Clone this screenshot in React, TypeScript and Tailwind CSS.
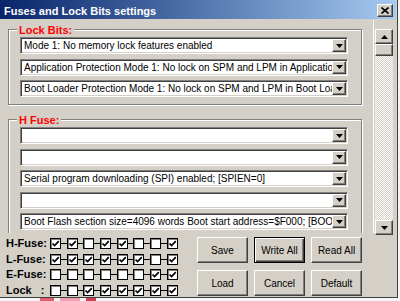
import React from 'react'

const raised =
  'border border-t-white border-l-white border-r-[#404040] border-b-[#404040] shadow-[inset_-1px_-1px_0_#808080] bg-[#d4d0c8]'

function Arrow({ up = false }: { up?: boolean }) {
  return (
    <svg width="7" height="4" viewBox="0 0 7 4" className={up ? 'rotate-180' : ''}>
      <path d="M0 0h7L3.5 4z" fill="#000" />
    </svg>
  )
}

function Combo({ text }: { text: string }) {
  return (
    <div className="flex h-[17px] w-[328px] border border-t-[#808080] border-l-[#808080] border-r-white border-b-white bg-white p-[1px] shadow-[inset_1px_1px_0_#404040,inset_-1px_-1px_0_#d4d0c8]">
      <div className="flex-1 overflow-hidden whitespace-nowrap pl-[2px] text-[10px] leading-[13px] text-black">
        {text}
      </div>
      <div className={`flex w-[14px] items-center justify-center ${raised}`}>
        <Arrow />
      </div>
    </div>
  )
}

function Group({ title, items }: { title: string; items: string[] }) {
  return (
    <div className="relative w-[354px] border border-[#808080] px-[11px] pt-[7px] pb-[7px] shadow-[inset_1px_1px_0_#fff,1px_1px_0_#fff]">
      <span className="absolute -top-[6px] left-[8px] bg-[#d4d0c8] px-[2px] text-[11px] leading-[12px] font-bold text-[#ff0000]">
        {title}
      </span>
      <div className="flex flex-col gap-[4.5px]">
        {items.map((t, i) => (
          <Combo key={i} text={t} />
        ))}
      </div>
    </div>
  )
}

const fuseRows: { label: React.ReactNode; bits: number[] }[] = [
  { label: 'H-Fuse:', bits: [1, 1, 0, 1, 1, 0, 0, 1] },
  { label: 'L-Fuse:', bits: [1, 1, 1, 1, 1, 1, 0, 1] },
  { label: 'E-Fuse:', bits: [0, 0, 0, 0, 0, 0, 1, 1] },
  {
    label: (
      <>
        Lock<span className="ml-[9px]">:</span>
      </>
    ),
    bits: [0, 0, 1, 1, 1, 1, 1, 1],
  },
]

function Check({ on }: { on: boolean }) {
  return (
    <div className="flex h-[11px] w-[11px] shrink-0 items-center justify-center border border-black bg-white shadow-[inset_1px_1px_0_#808080]">
      {on && (
        <svg width="9" height="9" viewBox="0 0 9 9">
          <path d="M1.5 4.5 3.6 6.6 7.8 2.2" fill="none" stroke="#000" strokeWidth="1.7" />
        </svg>
      )}
    </div>
  )
}

function Btn({ label, def = false }: { label: string; def?: boolean }) {
  const cls = def
    ? 'border border-black bg-[#d4d0c8] shadow-[inset_1px_1px_0_#fff,inset_-1px_-1px_0_#404040,inset_-2px_-2px_0_#808080]'
    : raised
  return (
    <div
      className={`flex h-[26px] w-[51px] items-center justify-center text-[10px] text-black ${cls}`}
    >
      {label}
    </div>
  )
}

export default function App() {
  return (
    <div
      className="h-[301px] w-[400px] overflow-hidden bg-[#f4f4f4]"
      style={{ fontFamily: '"Liberation Sans", Arial, sans-serif' }}
    >
      <div className="flex h-[298px] w-[398px] flex-col border-r border-b border-[#404040] bg-[#d4d0c8]">
        {/* title bar */}
        <div className="flex h-[19px] w-[396px] shrink-0 items-start justify-between bg-gradient-to-r from-[#0a246a] to-[#a6caf0] pr-[3px]">
          <span className="pt-[5px] pl-[4px] text-[11px] leading-[12px] font-bold text-white">
            Fuses and Lock Bits settings
          </span>
          <div className={`mt-[4px] flex h-[13px] w-[16px] items-center justify-center ${raised}`}>
            <svg width="8" height="7" viewBox="0 0 8 7">
              <path d="M0.5 0.5 7.5 6.5M7.5 0.5 0.5 6.5" stroke="#000" strokeWidth="1.6" />
            </svg>
          </div>
        </div>

        {/* scroll area */}
        <div className="mt-[1px] flex h-[215px] shrink-0">
          <div className="h-[213px] w-[374px] overflow-hidden border-r border-white pt-[9px] pl-[8px]">
            <Group
              title="Lock Bits:"
              items={[
                'Mode 1: No memory lock features enabled',
                'Application Protection Mode 1: No lock on SPM and LPM in Application Section',
                'Boot Loader Protection Mode 1: No lock on SPM and LPM in Boot Loader Section',
              ]}
            />
            <div className="mt-[14px]">
              <Group
                title="H Fuse:"
                items={[
                  '',
                  '',
                  'Serial program downloading (SPI) enabled; [SPIEN=0]',
                  '',
                  'Boot Flash section size=4096 words Boot start address=$F000; [BOOTSZ=00]',
                  '',
                ]}
              />
            </div>
          </div>
          <div className="ml-[1px] flex w-[18px] flex-col pt-[9px]">
            <div className={`flex h-[15px] items-center justify-center ${raised}`}>
              <Arrow up />
            </div>
            <div className={`h-[12px] ${raised}`} />
            <div className="flex-1 bg-[repeating-conic-gradient(#ffffff_0_25%,#d4d0c8_0_50%)] bg-[length:2px_2px]" />
            <div className={`flex h-[15px] items-center justify-center ${raised}`}>
              <Arrow />
            </div>
          </div>
        </div>

        {/* fuse bits and buttons */}
        <div className="flex flex-1">
          <div className="flex w-[197px] flex-col gap-[4.5px] pt-[3px] pl-[6px]">
            {fuseRows.map((r, i) => (
              <div key={i} className="flex h-[11px] items-center">
                <div className="w-[44px] text-[11px] leading-[11px] font-bold whitespace-nowrap text-black">
                  {r.label}
                </div>
                {r.bits.map((b, j) => (
                  <React.Fragment key={j}>
                    {j > 0 && <div className="h-[1px] w-[5.67px] shrink-0 bg-black" />}
                    <Check on={b === 1} />
                  </React.Fragment>
                ))}
              </div>
            ))}
          </div>
          <div className="grid grid-cols-[51px_51px_51px] gap-x-[6px] gap-y-[6px] pt-[2px]">
            <Btn label="Save" />
            <Btn label="Write All" def />
            <Btn label="Read All" />
            <Btn label="Load" />
            <Btn label="Cancel" />
            <Btn label="Default" />
          </div>
        </div>
      </div>
      <div className="flex h-[3px] gap-[6px] pl-[40px]">
        <div className="w-[14px] bg-[#e06070]" />
        <div className="w-[20px] bg-[#f0a0b0]" />
        <div className="w-[10px] bg-[#d04050]" />
      </div>
    </div>
  )
}
